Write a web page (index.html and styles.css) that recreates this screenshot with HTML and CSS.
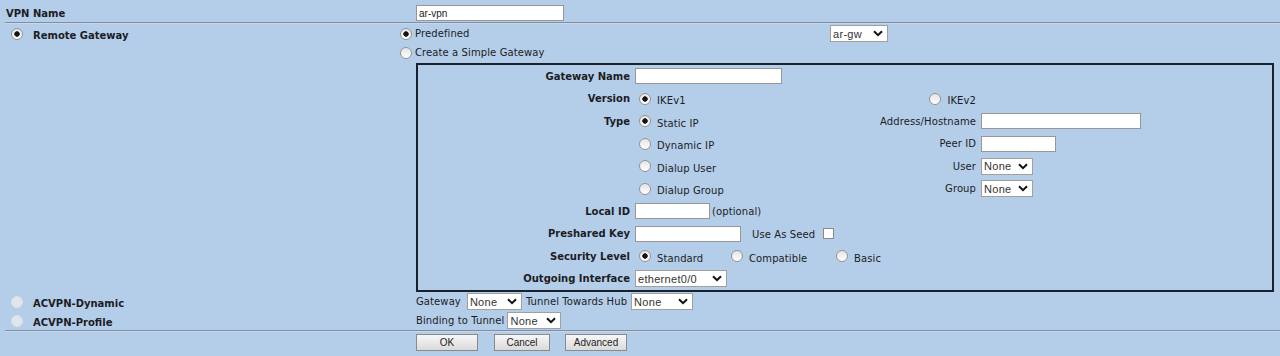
FILE: index.html
```html
<!DOCTYPE html>
<html lang="en">
<head>
    <meta charset="UTF-8">
    <meta name="viewport" content="width=device-width, initial-scale=1.0">
    <title>VPN Settings</title>
    <link rel="stylesheet" href="styles.css">
</head>
<body>
    <form class="vpn-form">
        <div class="row row-name">
            <div class="key">VPN Name</div>
            <div class="val indent"><input type="text" class="text w-name" value="ar-vpn"></div>
        </div>
        <div class="rule"></div>

        <div class="row">
            <div class="key key-top">
                <input type="radio" name="kind" checked>
                <span>Remote Gateway</span>
            </div>
            <div class="val">
                <div class="choice">
                    <label class="pick pick-wide"><input type="radio" name="gwmode" checked>Predefined</label>
                    <select class="sel w-gw"><option>ar-gw</option></select>
                </div>
                <div class="choice">
                    <label class="pick"><input type="radio" name="gwmode">Create a Simple Gateway</label>
                </div>

                <div class="box">
                    <div class="lab">Gateway Name</div>
                    <div class="cell"><input type="text" class="text w-gwname"></div>

                    <div class="lab c1">Version</div>
                    <div class="cell"><label class="opt"><input type="radio" name="ike" checked><span>IKEv1</span></label></div>
                    <div class="cell right"><label class="opt"><input type="radio" name="ike"><span>IKEv2</span></label></div>

                    <div class="lab c1">Type</div>
                    <div class="cell"><label class="opt"><input type="radio" name="type" checked><span>Static IP</span></label></div>
                    <div class="cell right">Address/Hostname</div>
                    <div class="cell"><input type="text" class="text w-addr"></div>

                    <div class="cell c2"><label class="opt"><input type="radio" name="type"><span>Dynamic IP</span></label></div>
                    <div class="cell right">Peer ID</div>
                    <div class="cell"><input type="text" class="text w-peer"></div>

                    <div class="cell c2"><label class="opt"><input type="radio" name="type"><span>Dialup User</span></label></div>
                    <div class="cell right">User</div>
                    <div class="cell"><select class="sel w-none"><option>None</option></select></div>

                    <div class="cell c2"><label class="opt"><input type="radio" name="type"><span>Dialup Group</span></label></div>
                    <div class="cell right">Group</div>
                    <div class="cell"><select class="sel w-none"><option>None</option></select></div>

                    <div class="lab c1">Local ID</div>
                    <div class="cell"><input type="text" class="text w-local"><span class="hint">(optional)</span></div>

                    <div class="lab c1">Preshared Key</div>
                    <div class="cell span"><input type="password" class="text w-psk"><span class="seed">Use As Seed</span><input type="checkbox" class="check"></div>

                    <div class="lab c1">Security Level</div>
                    <div class="cell span">
                        <label class="opt w-std"><input type="radio" name="level" checked><span>Standard</span></label>
                        <label class="opt w-comp"><input type="radio" name="level"><span>Compatible</span></label>
                        <label class="opt"><input type="radio" name="level"><span>Basic</span></label>
                    </div>

                    <div class="lab c1">Outgoing Interface</div>
                    <div class="cell"><select class="sel w-if"><option>ethernet0/0</option></select></div>
                </div>
            </div>
        </div>

        <div class="row row-acvpn">
            <div class="key">
                <input type="radio" name="kind" disabled>
                <span>ACVPN-Dynamic</span>
            </div>
            <div class="val indent">
                <span class="plain">Gateway</span>
                <select class="sel w-gwsel"><option>None</option></select>
                <span class="plain">Tunnel Towards Hub</span>
                <select class="sel w-hub"><option>None</option></select>
            </div>
        </div>
        <div class="row row-acvpn">
            <div class="key">
                <input type="radio" name="kind" disabled>
                <span>ACVPN-Profile</span>
            </div>
            <div class="val indent">
                <span class="plain">Binding to Tunnel</span>
                <select class="sel w-bind"><option>None</option></select>
            </div>
        </div>
        <div class="rule"></div>

        <div class="buttons">
            <button type="button" class="btn w-ok">OK</button>
            <button type="button" class="btn w-cancel">Cancel</button>
            <button type="button" class="btn w-adv">Advanced</button>
        </div>
    </form>
</body>
</html>
```

FILE: styles.css
```css
body {
    margin: 0;
    background-color: #b4cee9;
    font-family: "DejaVu Sans", Verdana, sans-serif;
    font-size: 10px;
    letter-spacing: 0.1px;
    color: #1c1c24;
}

.vpn-form {
    padding-top: 4px;
}

.row {
    display: grid;
    grid-template-columns: 398px 1fr;
}

.key {
    display: flex;
    align-items: center;
    padding-left: 6px;
    font-weight: bold;
    letter-spacing: 0;
}

.key span {
    margin-top: 3px;
}

.key-top {
    align-self: start;
    height: 19px;
}

.key input[type="radio"] {
    margin: 0 10px 0 5px;
}

.val {
    display: flex;
    flex-direction: column;
}

.val.indent {
    flex-direction: row;
    align-items: center;
    padding-left: 18px;
}

.row-name {
    height: 18px;
}

.row-acvpn {
    height: 19px;
}

.rule {
    height: 1px;
    margin-left: 5px;
    background-color: #7f8ea0;
    border-bottom: 1px solid #c8d8ea;
}

.choice {
    display: flex;
    align-items: center;
    height: 19px;
}

.pick {
    display: flex;
    align-items: center;
}

.pick-wide {
    width: 432px;
}

.pick input[type="radio"] {
    margin: 0 3px 0 2px;
}

/* radios, checkbox */

input[type="radio"] {
    appearance: none;
    width: 12px;
    height: 12px;
    margin: 0;
    border: 1px solid #949494;
    border-radius: 50%;
    background: linear-gradient(#e4e4e4, #ffffff);
    flex-shrink: 0;
}

input[type="radio"]:checked {
    background: radial-gradient(circle, #141414 0 2.4px, transparent 3px), linear-gradient(#e4e4e4, #ffffff);
}

input[type="radio"]:disabled {
    border-color: #d9e0e7;
    background: #e1e6ec;
}

.check {
    appearance: none;
    width: 11px;
    height: 11px;
    margin: 0 0 0 8px;
    border: 1px solid #8a8a8a;
    background-color: #fff;
}

/* text fields and selects */

.text {
    box-sizing: border-box;
    height: 16px;
    margin: 0;
    padding: 0 2px;
    border: 1px solid #979797;
    background-color: #fff;
    font-family: "Liberation Sans", Arial, sans-serif;
    font-size: 10px;
    letter-spacing: 0;
    color: #222;
}

.sel {
    box-sizing: border-box;
    appearance: none;
    height: 17px;
    margin: 0;
    padding: 0 0 0 2px;
    border: 1px solid #a0a0a0;
    border-radius: 0;
    background: #fff url("data:image/svg+xml;utf8,<svg xmlns='http://www.w3.org/2000/svg' width='10' height='7'><path d='M1 1.2l4 4 4-4' fill='none' stroke='%23111' stroke-width='2'/></svg>") no-repeat right 4px center;
    font-family: "Liberation Sans", Arial, sans-serif;
    font-size: 11px;
    letter-spacing: 0.3px;
    color: #333;
}

.w-name { width: 148px; }
.w-gw { width: 58px; }
.w-gwname { width: 147px; }
.w-addr { width: 160px; }
.w-peer { width: 75px; }
.w-local { width: 75px; }
.w-psk { width: 106px; }
.w-none { width: 52px; }
.w-if { width: 92px; }
.w-gwsel { width: 55px; margin: 0 4px 0 6px; }
.w-hub { width: 62px; margin-left: 4px; }
.w-bind { width: 54px; margin-left: 3px; }

/* simple gateway box */

.box {
    display: grid;
    grid-template-columns: 217px 235px 111px 1fr;
    grid-auto-rows: 22.5px;
    margin: 1px 6px 0 18px;
    border: 2px solid #17222d;
}

.lab {
    display: flex;
    align-items: center;
    justify-content: flex-end;
    padding-right: 5px;
    font-weight: bold;
    letter-spacing: 0;
}

.cell {
    display: flex;
    align-items: center;
}

.cell.right {
    justify-content: flex-end;
    padding-right: 5px;
}

.c1 { grid-column: 1; }
.c2 { grid-column: 2; }
.span { grid-column: 2 / -1; }

.opt {
    display: flex;
    align-items: center;
}

.opt input[type="radio"] {
    margin: 0 6px 0 4px;
}

.opt span {
    margin-top: 4px;
}

.w-std { width: 92px; }
.w-comp { width: 105px; }

.hint {
    margin-left: 2px;
}

.seed {
    margin-left: 11px;
    margin-top: 2px;
}

/* buttons */

.buttons {
    display: flex;
    padding: 2px 0 0 416px;
}

.btn {
    height: 17px;
    margin: 0 16px 0 0;
    padding: 0;
    border: 1px solid #8a8a8a;
    background: linear-gradient(#f7f7f7, #dadada);
    font-family: "Liberation Sans", Arial, sans-serif;
    font-size: 10px;
    color: #222;
}

.w-ok { width: 62px; }
.w-cancel { width: 56px; margin-right: 15px; }
.w-adv { width: 62px; }
```
